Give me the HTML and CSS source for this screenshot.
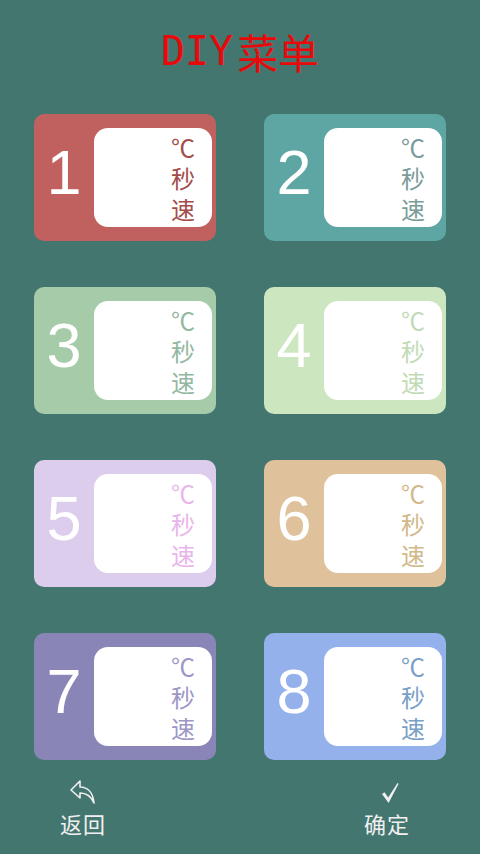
FILE: index.html
```html
<!DOCTYPE html>
<html lang="zh">
<head>
<meta charset="utf-8">
<link rel="stylesheet" href="styles.css">
</head>
<body>
<div class="page">
  <header class="title"><span class="latin">DIY</span>菜单</header>
  <main class="grid">
    <div class="card c1"><div class="num">1</div><div class="panel"><span>℃</span><span>秒</span><span>速</span></div></div>
    <div class="card c2"><div class="num">2</div><div class="panel"><span>℃</span><span>秒</span><span>速</span></div></div>
    <div class="card c3"><div class="num">3</div><div class="panel"><span>℃</span><span>秒</span><span>速</span></div></div>
    <div class="card c4"><div class="num">4</div><div class="panel"><span>℃</span><span>秒</span><span>速</span></div></div>
    <div class="card c5"><div class="num">5</div><div class="panel"><span>℃</span><span>秒</span><span>速</span></div></div>
    <div class="card c6"><div class="num">6</div><div class="panel"><span>℃</span><span>秒</span><span>速</span></div></div>
    <div class="card c7"><div class="num">7</div><div class="panel"><span>℃</span><span>秒</span><span>速</span></div></div>
    <div class="card c8"><div class="num">8</div><div class="panel"><span>℃</span><span>秒</span><span>速</span></div></div>
  </main>
  <footer class="bar">
    <div class="btn back">
      <svg class="ico" width="28" height="27" viewBox="0 0 28 27"><path d="M11 2 L2 11 L11 19 L11 14 C17 14 22 17 25 24 C24 14 19 8 11 8 Z" fill="none" stroke="#f0f0f0" stroke-width="1.6" stroke-linejoin="round"/></svg>
      <span class="lbl">返回</span>
    </div>
    <div class="btn ok">
      <svg class="ico check" width="20" height="27" viewBox="0 0 20 27"><path d="M2 15 L4.5 13.2 L8.2 18.5 L17.5 4 L18.6 4.8 L8.6 24 Z" fill="#f0f0f0"/></svg>
      <span class="lbl">确定</span>
    </div>
  </footer>
</div>
</body>
</html>
```
FILE: styles.css
```css
html, body {
  margin: 0;
  padding: 0;
}
body {
  background: #447670;
  width: 480px;
  height: 854px;
  overflow: hidden;
  font-family: "Noto Sans CJK SC", sans-serif;
}
.page {
  display: flex;
  flex-direction: column;
  height: 854px;
}
.title {
  height: 102px;
  display: flex;
  align-items: center;
  justify-content: center;
  color: #e80a0a;
  font-size: 41px;
  font-family: "Noto Sans CJK SC", sans-serif;
  line-height: 1;
}
.title .latin {
  font-family: "DejaVu Sans Mono", monospace;
  font-size: 40px;
  margin-right: 4px;
}
.grid {
  display: grid;
  grid-template-columns: 182px 182px;
  grid-auto-rows: 127px;
  column-gap: 48px;
  row-gap: 46px;
  padding: 12px 34px 0;
}
.card {
  display: flex;
  padding: 14px 4px 14px 0;
  border-radius: 10px;
}
.num {
  width: 60px;
  flex: none;
  display: flex;
  align-items: center;
  justify-content: center;
  color: #ffffff;
  font-family: "Liberation Sans", sans-serif;
  font-size: 63px;
  padding-bottom: 12px;
  box-sizing: border-box;
}
.panel {
  flex: 1;
  background: #ffffff;
  border-radius: 14px;
  display: flex;
  flex-direction: column;
  align-items: flex-end;
  padding: 3px 17px 0 0;
  font-size: 24px;
  line-height: 31px;
  font-family: "Noto Sans CJK SC", sans-serif;
}
.c1 { background: #c0605f; color: #a34d4b; }
.c2 { background: #5ea6a4; color: #7a9c9a; }
.c3 { background: #a5cba9; color: #93b8a2; }
.c4 { background: #cce6bf; color: #c1dbb6; }
.c5 { background: #dccdec; color: #e8b6ea; }
.c6 { background: #dfc29c; color: #d2b88a; }
.c7 { background: #8a85b7; color: #9d97c8; }
.c8 { background: #94b1ec; color: #7aa0c6; }
.bar {
  display: flex;
  justify-content: space-between;
  padding: 19px 63px 0 53px;
}
.btn {
  width: 60px;
  display: flex;
  flex-direction: column;
  align-items: center;
  color: #f0f0f0;
}
.ico {
  display: block;
}
.check {
  margin-left: 6px;
}
.lbl {
  font-size: 22px;
  line-height: 26px;
  margin-top: 4px;
  letter-spacing: 1px;
}
```
